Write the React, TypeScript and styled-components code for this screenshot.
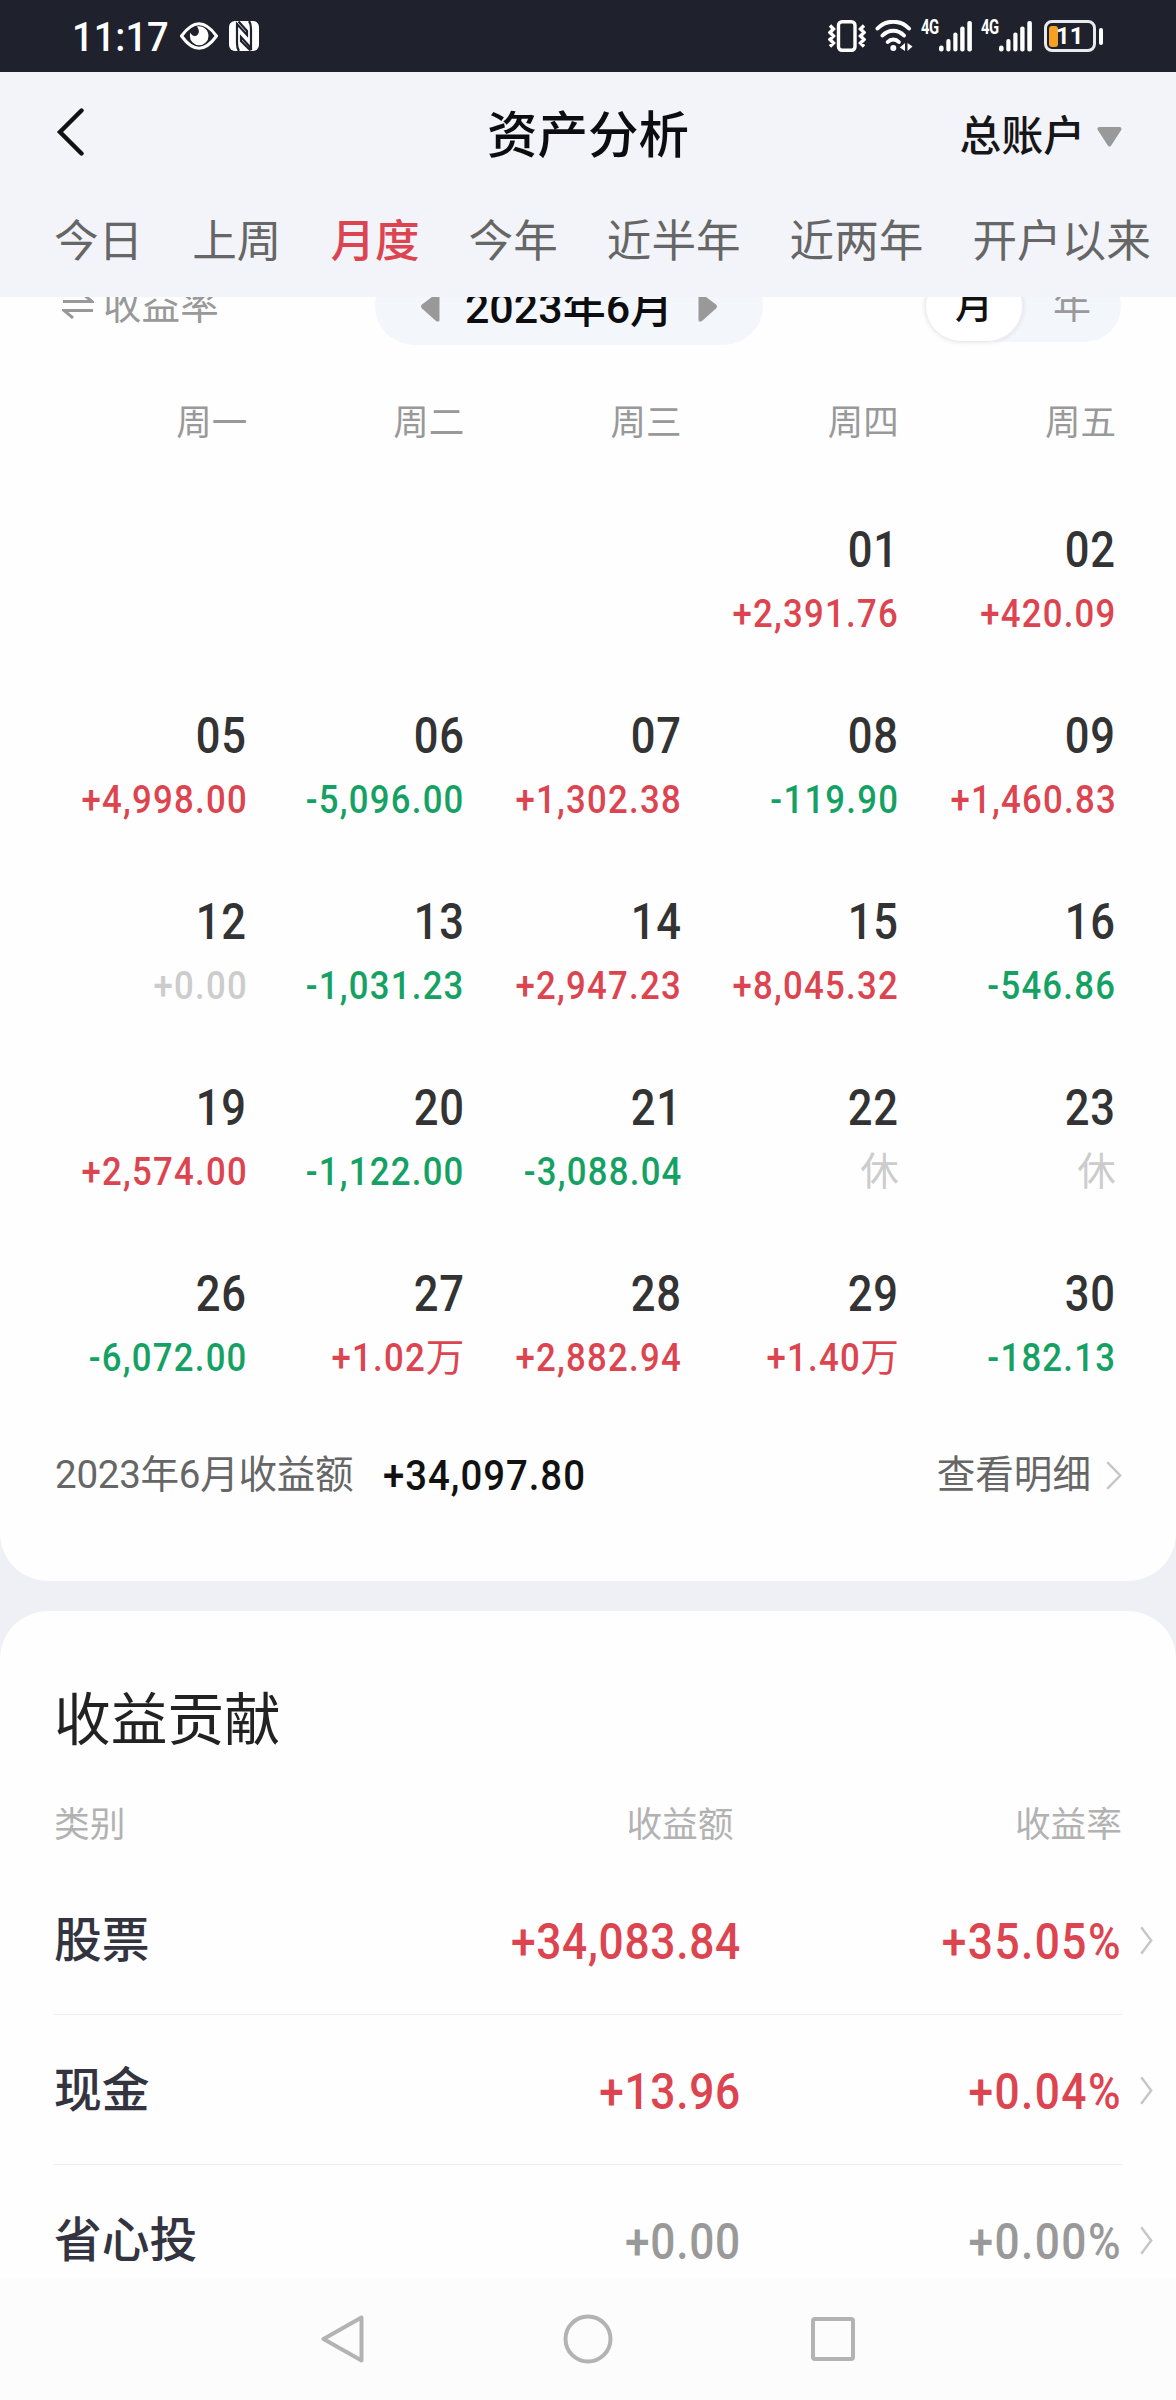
import React from "react";
import styled, { createGlobalStyle } from "styled-components";

type Tone = "up" | "down" | "flat" | "muted";

const toneColor: Record<Tone, string> = {
  up: "#dc4450",
  down: "#16a164",
  flat: "#cccccc",
  muted: "#999999",
};

const GlobalStyle = createGlobalStyle`
  * { box-sizing: border-box; }
  body {
    margin: 0;
    background: #eff0f5;
    font-family: Roboto, "Noto Sans CJK SC", sans-serif;
    color: #111;
  }
  svg { display: block; flex: none; }
`;

const Screen = styled.div`
  width: 1176px;
  height: 2400px;
  display: flex;
  flex-direction: column;
  overflow: hidden;
  white-space: nowrap;
`;

const StatusBar = styled.div`
  flex: none;
  height: 72px;
  padding: 0 73px 0 72px;
  display: flex;
  align-items: center;
  justify-content: space-between;
  background: #1f222c;
  color: #fff;
`;

const StatusGroup = styled.div<{ $gap: number }>`
  display: flex;
  align-items: center;
  gap: ${(p) => p.$gap}px;
`;

const Clock = styled.span`
  width: 97px;
  padding-top: 1px;
  font-size: 41px;
  line-height: 48px;
  font-weight: 500;
  transform: scaleX(0.93);
  transform-origin: left;
`;

const NetworkSignal = styled.div`
  display: flex;
  align-items: center;
`;

const Network = styled.span`
  width: 18px;
  margin: 0 0 18px -1px;
  font-size: 20px;
  line-height: 16px;
  font-weight: 700;
  letter-spacing: -0.5px;
  transform: scaleX(0.74);
  transform-origin: left;
`;

const Battery = styled.div`
  margin-left: 2px;
  display: flex;
  align-items: center;
  gap: 3px;
`;

const BatteryCase = styled.div`
  width: 52px;
  height: 32px;
  padding: 0 2px;
  display: flex;
  align-items: center;
  border: 3px solid #e9eaec;
  border-radius: 8px;
`;

const BatteryLevel = styled.span`
  width: 9px;
  height: 21px;
  border-radius: 3px;
  background: #f7a021;
`;

const BatteryText = styled.span`
  margin-left: -2px;
  font-size: 24px;
  line-height: 24px;
  font-weight: 700;
`;

const BatteryTip = styled.span`
  width: 4px;
  height: 17px;
  border-radius: 2px;
  background: #fff;
`;

const Header = styled.header`
  flex: none;
  height: 225px;
  background: #f3f4f9;
`;

const TitleRow = styled.div`
  height: 128px;
  padding: 0 54px;
  display: grid;
  grid-template-columns: 1fr auto 1fr;
  align-items: center;
`;

const BackButton = styled.div`
  padding: 0 0 9px 2px;
`;

const Title = styled.h1`
  margin: 0;
  font-size: 50.5px;
  line-height: 64px;
  font-weight: 500;
  color: #0d0d0f;
`;

const AccountPicker = styled.div`
  padding-top: 2px;
  display: flex;
  align-items: center;
  justify-content: flex-end;
  gap: 12px;
  font-size: 41.8px;
  line-height: 56px;
  font-weight: 500;
  color: #161618;
`;

const Tabs = styled.nav`
  height: 82px;
  padding: 1px 0 0 54px;
  display: flex;
  align-items: center;
  gap: 49px;
`;

const Tab = styled.span<{ $active: boolean }>`
  font-size: 44.6px;
  line-height: 60px;
  font-weight: ${(p) => (p.$active ? 500 : 400)};
  color: ${(p) => (p.$active ? "#dc4450" : "#666")};
`;

const Scroller = styled.main`
  flex: 1;
  min-height: 0;
  overflow: hidden;
`;

const CalendarCard = styled.section`
  margin-top: -30px;
  height: 1314px;
  background: #fefefe;
  border-radius: 0 0 48px 48px;
`;

const Controls = styled.div`
  height: 78px;
  padding: 0 55px 0 62px;
  display: flex;
  align-items: center;
`;

const RateSwitch = styled.div`
  width: 313px;
  display: flex;
  align-items: center;
  gap: 9px;
  font-size: 38.6px;
  line-height: 50px;
  color: #999;
`;

const MonthPicker = styled.div`
  width: 388px;
  height: 78px;
  display: flex;
  align-items: center;
  justify-content: space-between;
  padding: 0 45px;
  border-radius: 39px;
  background: #f3f7fc;
`;

const MonthLabel = styled.span`
  padding-top: 3px;
  font-size: 43px;
  line-height: 56px;
  font-weight: 500;
  color: #0d0d0f;
`;

const PeriodToggle = styled.div`
  width: 196px;
  height: 72px;
  margin-left: auto;
  display: flex;
  border-radius: 36px;
  background: #f3f7fc;
`;

const Period = styled.span<{ $active: boolean }>`
  flex: ${(p) => (p.$active ? "0 0 98px" : "1")};
  padding-bottom: 2px;
  display: flex;
  align-items: center;
  justify-content: center;
  font-size: 38px;
  line-height: 50px;
  font-weight: ${(p) => (p.$active ? 500 : 400)};
  color: ${(p) => (p.$active ? "#111" : "#999")};
  border-radius: 36px;
  background: ${(p) => (p.$active ? "#fff" : "transparent")};
  box-shadow: ${(p) => (p.$active ? "inset 0 0 0 1px #e9ebee, 0 0 5px rgba(0, 0, 0, 0.12)" : "none")};
`;

const Week = styled.div`
  padding: 0 60px 0 30px;
  display: grid;
  grid-template-columns: repeat(5, 217.2px);
`;

const Weekdays = styled(Week)`
  margin: 54px 0 73px;
  font-size: 35.5px;
  line-height: 48px;
  text-align: right;
  color: #999;
`;

const Day = styled.div`
  height: 186px;
  display: flex;
  flex-direction: column;
  align-items: flex-end;
  gap: 11px;
`;

/* Digits are condensed horizontally to get the narrow, evenly spaced look of a DIN face. */
const Numeral = styled.span`
  display: inline-block;
  transform: scaleX(0.9);
  transform-origin: right;
`;

const DayNumber = styled(Numeral)`
  height: 60px;
  font-size: 50px;
  line-height: 60px;
  font-weight: 500;
  letter-spacing: 1px;
  color: #333;
  transform: scaleX(0.87);
`;

const Amount = styled.div<{ $tone: Tone }>`
  height: 46px;
  font-size: 38.6px;
  line-height: 46px;
  font-weight: 500;
  color: ${(p) => toneColor[p.$tone]};
`;

const AmountDigits = styled(Numeral)`
  margin-right: -0.6px;
  letter-spacing: 1.4px;
`;

const CjkUnit = styled.span`
  font-weight: 400;
`;

const Summary = styled.div`
  height: 50px;
  padding: 0 54px;
  display: flex;
  align-items: center;
  line-height: 50px;
`;

const SummaryLabel = styled.span`
  width: 329px;
  padding-left: 1px;
  font-size: 38.6px;
  letter-spacing: -0.3px;
  color: #666;
`;

const SummaryValue = styled(Numeral)`
  font-size: 42.6px;
  font-weight: 500;
  letter-spacing: 1.1px;
  transform-origin: left;
`;

const DetailLink = styled.span`
  margin-left: auto;
  display: flex;
  align-items: center;
  gap: 15px;
  font-size: 38.6px;
  color: #666;
`;

const ContributionCard = styled.section`
  margin-top: 30px;
  height: 760px;
  padding: 75px 54px 0;
  background: #fefefe;
  border-radius: 48px 48px 0 0;
`;

const SectionTitle = styled.h2`
  margin: 0 0 44px;
  font-size: 56.7px;
  line-height: 70px;
  font-weight: 400;
  color: #222;
`;

const TableHead = styled.div`
  height: 50px;
  margin-bottom: 15px;
  display: grid;
  grid-template-columns: 300px 379.5px 1fr;
  font-size: 35.7px;
  line-height: 50px;
  color: #b2b2b2;
`;

const HeadCell = styled.span<{ $end?: boolean }>`
  text-align: ${(p) => (p.$end ? "right" : "left")};
`;

const TableRow = styled.div`
  position: relative;
  height: 150px;
  padding-top: 4px;
  display: grid;
  grid-template-columns: 300px 387px 1fr;
  align-items: center;
  border-bottom: 1.5px solid #ededef;
`;

const Category = styled.span`
  margin-top: -2px;
  font-size: 47.8px;
  line-height: 60px;
  font-weight: 500;
  color: #33343f;
`;

const Figure = styled(Numeral)<{ $tone: Tone; $spacing: number }>`
  font-size: 49.2px;
  line-height: 60px;
  font-weight: 500;
  letter-spacing: ${(p) => p.$spacing}px;
  text-align: right;
  color: ${(p) => toneColor[p.$tone]};
`;

const RowArrow = styled.span`
  position: absolute;
  right: -31px;
  top: 61px;
`;

const NavBar = styled.footer`
  flex: none;
  height: 122px;
  display: flex;
  align-items: center;
  justify-content: center;
  gap: 198px;
  background: #fcfcfc;
`;

const EyeIcon = () => (
  <svg width="38" height="28" viewBox="0 0 38 28">
    <path d="M1.5 14C8 5 13 1.8 19 1.8S30 5 36.5 14C30 23 25 26.2 19 26.2S8 23 1.5 14Z" fill="none" stroke="#fff" strokeWidth="3" strokeLinejoin="round" />
    <path d="M17 4.5c7-1 11.500 4 11.500 9.500a9.300 9.300 0 0 1-18.600 0c0-1.300.2-2.400.6-3.400.6 2.400 2.500 3.700 4.600 3.500 3.600-.4 5.400-5 1.900-9.600Z" fill="#fff" />
  </svg>
);

const NfcIcon = () => (
  <svg width="30" height="30" viewBox="0 0 30 30">
    <rect width="30" height="30" rx="6" fill="#fff" />
    <path d="M10 30C8.500 28 8 26 8 22V3L18 14V10L9.500 .5M20 0c1.500 2 2 4 2 8v19L12 16v4l9.500 9.500" fill="none" stroke="#1f222c" strokeWidth="2.200" />
  </svg>
);

const VibrateIcon = () => (
  <svg width="38" height="32" viewBox="0 0 38 32" fill="none" stroke="#fff" strokeWidth="3.400">
    <rect x="10.500" y="1.700" width="16.500" height="28.600" rx="3.500" />
    <path d="M2 5.500l3.500 3.500-3.500 3.500 3.500 3.500-3.500 3.500 3.500 3.500-3.500 3.500M36 5.500l-3.500 3.500 3.500 3.500-3.500 3.500 3.500 3.500-3.500 3.500 3.500 3.500" />
  </svg>
);

const WifiIcon = () => (
  <svg width="38" height="32" viewBox="0 0 38 32" fill="none" stroke="#fff" strokeWidth="4" strokeLinecap="round">
    <path d="M2.500 8.500C11-.5 25.500-.5 34 8.500M7.500 15.500c6-6.500 15.500-6.500 21.500 0M12.800 22c3-3.200 8-3.200 11 0" />
    <circle cx="18.300" cy="28" r="3" fill="#fff" stroke="none" />
    <path d="M30 23v8l-5.200-3.500ZM32.500 23l5 3.500-5 4.500Z" fill="#fff" stroke="none" />
  </svg>
);

const SignalIcon = () => (
  <svg width="34" height="32" viewBox="0 0 34 32" fill="#fff">
    <rect x="0" y="25.500" width="4.600" height="6" rx="2.200" />
    <rect x="7.300" y="19" width="4.200" height="12.500" rx="2" />
    <rect x="14.300" y="12.500" width="4.200" height="19" rx="2" />
    <rect x="21.200" y="6.500" width="4.400" height="25" rx="2" />
    <rect x="28.300" y="1" width="4.600" height="30.500" rx="2" />
  </svg>
);

const Chevron = ({ width }: { width: number }) => (
  <svg width={width} height="29" viewBox={`0 0 ${width} 29`} fill="none" stroke="#c6c6c8" strokeWidth="2.400">
    <path d={`M1.200 1.200L${width - 1.8} 14.500L1.200 27.800`} />
  </svg>
);

const Caret = ({ flip }: { flip?: boolean }) => (
  <svg width="20" height="33" viewBox="0 0 20 33">
    <path
      d={flip ? "M1.500 2L18 14.500Q20 16.500 18 18.500L4 31Q.5 32.500 .5 30V2Z" : "M18.500 2L2 14.500Q0 16.500 2 18.500L16 31Q19.500 32.500 19.500 30V2Z"}
      fill="#999"
    />
  </svg>
);

const tabs = ["今日", "上周", "月度", "今年", "近半年", "近两年", "开户以来"];
const weekdays = ["周一", "周二", "周三", "周四", "周五"];

type DayEntry = [string, string] | null;

const weeks: DayEntry[][] = [
  [null, null, null, ["01", "+2,391.76"], ["02", "+420.09"]],
  [["05", "+4,998.00"], ["06", "-5,096.00"], ["07", "+1,302.38"], ["08", "-119.90"], ["09", "+1,460.83"]],
  [["12", "+0.00"], ["13", "-1,031.23"], ["14", "+2,947.23"], ["15", "+8,045.32"], ["16", "-546.86"]],
  [["19", "+2,574.00"], ["20", "-1,122.00"], ["21", "-3,088.04"], ["22", "休"], ["23", "休"]],
  [["26", "-6,072.00"], ["27", "+1.02万"], ["28", "+2,882.94"], ["29", "+1.40万"], ["30", "-182.13"]],
];

const rows: { name: string; amount: string; rate: string; tone: Tone }[] = [
  { name: "股票", amount: "+34,083.84", rate: "+35.05%", tone: "up" },
  { name: "现金", amount: "+13.96", rate: "+0.04%", tone: "up" },
  { name: "省心投", amount: "+0.00", rate: "+0.00%", tone: "muted" },
];

const toneOf = (value: string): Tone => {
  if (value === "休" || value === "+0.00") return "flat";
  return value.startsWith("-") ? "down" : "up";
};

const DayAmount = ({ value }: { value: string }) => {
  const unit = /[万休]$/.test(value) ? value.slice(-1) : "";
  const digits = unit ? value.slice(0, -1) : value;
  return (
    <Amount $tone={toneOf(value)}>
      {digits && <AmountDigits>{digits}</AmountDigits>}
      {unit && <CjkUnit>{unit}</CjkUnit>}
    </Amount>
  );
};

export default function App() {
  return (
    <>
      <GlobalStyle />
      <Screen>
        <StatusBar>
          <StatusGroup $gap={11}>
            <Clock>11:17</Clock>
            <EyeIcon />
            <NfcIcon />
          </StatusGroup>
          <StatusGroup $gap={9}>
            <VibrateIcon />
            <WifiIcon />
            <NetworkSignal>
              <Network>4G</Network>
              <SignalIcon />
            </NetworkSignal>
            <NetworkSignal>
              <Network>4G</Network>
              <SignalIcon />
            </NetworkSignal>
            <Battery>
              <BatteryCase>
                <BatteryLevel />
                <BatteryText>11</BatteryText>
              </BatteryCase>
              <BatteryTip />
            </Battery>
          </StatusGroup>
        </StatusBar>

        <Header>
          <TitleRow>
            <BackButton>
              <svg width="30" height="48" viewBox="0 0 30 48" fill="none" stroke="#111" strokeWidth="4.400" strokeLinecap="round">
                <path d="M25.500 2.500L4 24L25.500 45.500" />
              </svg>
            </BackButton>
            <Title>资产分析</Title>
            <AccountPicker>
              总账户
              <svg width="25" height="20" viewBox="0 0 25 20">
                <path d="M2.500 2H22.500L12.500 17.500Z" fill="#999" stroke="#999" strokeWidth="4" strokeLinejoin="round" />
              </svg>
            </AccountPicker>
          </TitleRow>
          <Tabs>
            {tabs.map((tab) => (
              <Tab key={tab} $active={tab === "月度"}>
                {tab}
              </Tab>
            ))}
          </Tabs>
        </Header>

        <Scroller>
          <CalendarCard>
            <Controls>
              <RateSwitch>
                <svg width="32" height="26" viewBox="0 0 32 26" fill="none" stroke="#999" strokeWidth="3">
                  <path d="M1 8.500H30L21 1M31 17.500H2L11 25" />
                </svg>
                收益率
              </RateSwitch>
              <MonthPicker>
                <Caret />
                <MonthLabel>2023年6月</MonthLabel>
                <Caret flip />
              </MonthPicker>
              <PeriodToggle>
                <Period $active>月</Period>
                <Period $active={false}>年</Period>
              </PeriodToggle>
            </Controls>

            <Weekdays>
              {weekdays.map((name) => (
                <span key={name}>{name}</span>
              ))}
            </Weekdays>

            {weeks.map((week, w) => (
              <Week key={w}>
                {week.map((day, d) => (
                  <Day key={d}>
                    {day && (
                      <>
                        <DayNumber>{day[0]}</DayNumber>
                        <DayAmount value={day[1]} />
                      </>
                    )}
                  </Day>
                ))}
              </Week>
            ))}

            <Summary>
              <SummaryLabel>2023年6月收益额</SummaryLabel>
              <SummaryValue>+34,097.80</SummaryValue>
              <DetailLink>
                查看明细
                <Chevron width={16} />
              </DetailLink>
            </Summary>
          </CalendarCard>

          <ContributionCard>
            <SectionTitle>收益贡献</SectionTitle>
            <TableHead>
              <HeadCell>类别</HeadCell>
              <HeadCell $end>收益额</HeadCell>
              <HeadCell $end>收益率</HeadCell>
            </TableHead>
            {rows.map((row) => (
              <TableRow key={row.name}>
                <Category>{row.name}</Category>
                <Figure $tone={row.tone} $spacing={0.8}>
                  {row.amount}
                </Figure>
                <Figure $tone={row.tone} $spacing={1.6}>
                  {row.rate}
                </Figure>
                <RowArrow>
                  <Chevron width={13} />
                </RowArrow>
              </TableRow>
            ))}
          </ContributionCard>
        </Scroller>

        <NavBar>
          <svg width="44" height="50" viewBox="0 0 44 50" fill="none" stroke="#b3b3b3" strokeWidth="4" strokeLinejoin="round">
            <path d="M40.500 3.500V46.500L2.500 25Z" />
          </svg>
          <svg width="50" height="50" viewBox="0 0 50 50" fill="none" stroke="#b3b3b3" strokeWidth="4">
            <circle cx="25" cy="25" r="22.500" />
          </svg>
          <svg width="44" height="44" viewBox="0 0 44 44" fill="none" stroke="#b3b3b3" strokeWidth="4">
            <rect x="2" y="2" width="40" height="40" rx="2" />
          </svg>
        </NavBar>
      </Screen>
    </>
  );
}
